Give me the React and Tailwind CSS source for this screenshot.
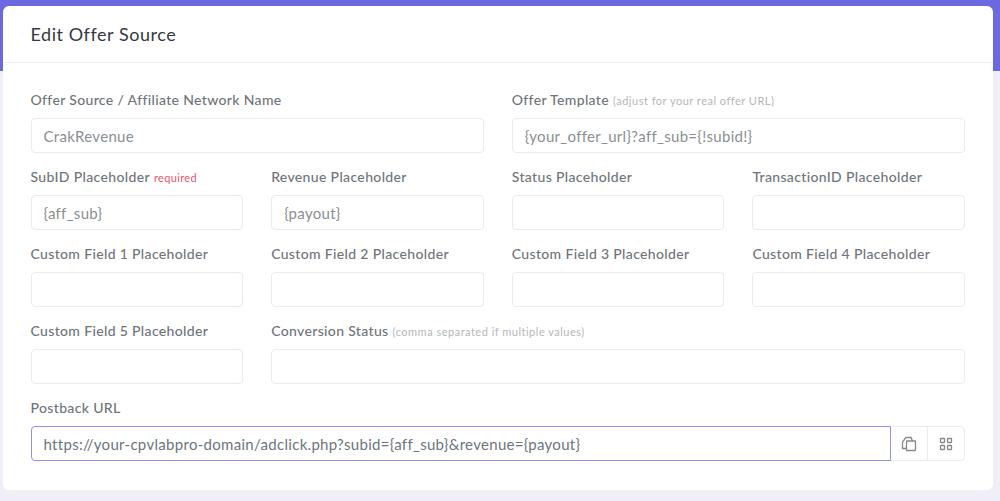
import React from "react";

const labelCls = "block h-[23px] mb-[4px] text-[14px] leading-[18px] font-medium text-[#6f757b] tracking-[0.35px] whitespace-nowrap";
const inputCls = "block w-full h-[35px] px-[12px] bg-white border border-[#e8ebf0] rounded-[4px] text-[15px] text-[#8a8f94] tracking-[0.3px] outline-none";

function Field({ label, note, required, value, className = "" }) {
  return (
    <div className={className}>
      <label className={labelCls}>
        {label}
        {note && <span className="ml-[4px] text-[11px] font-normal text-[#b3b7bb] tracking-[0.5px]">{note}</span>}
        {required && <span className="ml-[4px] text-[11px] font-normal text-[#f1556c] tracking-[0.35px]">required</span>}
      </label>
      <input className={inputCls} defaultValue={value || ""} />
    </div>
  );
}

export default function App() {
  return (
    <div className="w-[1000px] h-[501px] overflow-hidden bg-[#f0eff8]" style={{ fontFamily: '"Lato", "Noto Sans", sans-serif' }}>
      <div className="h-[71px] bg-[#6c69e0]" />
      <div className="-mt-[65px] ml-[3px] mr-[7px] h-[484px] bg-white rounded-[6px]">
        <div className="h-[57px] border-b border-[#e9edf0] pl-[27.5px] flex items-center">
          <h1 className="text-[18px] font-normal text-[#343a40] tracking-[0.55px]">Edit Offer Source</h1>
        </div>
        <div className="pl-[27.5px] pr-[28px] pt-[28px] grid grid-cols-4 gap-x-[28px] gap-y-[15px]">
          <Field className="col-span-2" label="Offer Source / Affiliate Network Name" value="CrakRevenue" />
          <Field className="col-span-2" label="Offer Template" note="(adjust for your real offer URL)" value="{your_offer_url}?aff_sub={!subid!}" />
          <Field label="SubID Placeholder" required value="{aff_sub}" />
          <Field label="Revenue Placeholder" value="{payout}" />
          <Field label="Status Placeholder" />
          <Field label="TransactionID Placeholder" />
          <Field label="Custom Field 1 Placeholder" />
          <Field label="Custom Field 2 Placeholder" />
          <Field label="Custom Field 3 Placeholder" />
          <Field label="Custom Field 4 Placeholder" />
          <Field label="Custom Field 5 Placeholder" />
          <Field className="col-span-3" label="Conversion Status" note="(comma separated if multiple values)" />
          <div className="col-span-4">
            <label className={labelCls}>Postback URL</label>
            <div className="flex h-[35px]">
              <input
                className="relative z-10 block flex-1 min-w-0 h-full px-[12px] bg-white border border-[#9391e8] rounded-l-[4px] text-[15px] text-[#6c757d] tracking-[0.3px] outline-none"
                defaultValue="https://your-cpvlabpro-domain/adclick.php?subid={aff_sub}&revenue={payout}"
              />
              <button className="w-[38px] -ml-px flex items-center justify-center bg-white border border-[#e8ebf0]">
                <svg width="16" height="16" viewBox="0 0 16 16" fill="none" stroke="#85898d" strokeWidth="1.3">
                  <rect x="5.5" y="5" width="9" height="9.5" rx="0.5" />
                  <path d="M5.5 12.5H1.5V6L5 1.5h5l1.5 3.5" />
                </svg>
              </button>
              <button className="w-[38px] -ml-px flex items-center justify-center bg-white border border-[#e8ebf0] rounded-r-[4px]">
                <svg width="14" height="14" viewBox="0 0 14 14" fill="none" stroke="#85898d" strokeWidth="1.3">
                  <rect x="1.5" y="1.5" width="4" height="4" rx="0.5" />
                  <rect x="8.5" y="1.5" width="4" height="4" rx="0.5" />
                  <rect x="1.5" y="8.5" width="4" height="4" rx="0.5" />
                  <rect x="8.5" y="8.5" width="4" height="4" rx="0.5" />
                </svg>
              </button>
            </div>
          </div>
        </div>
      </div>
    </div>
  );
}
